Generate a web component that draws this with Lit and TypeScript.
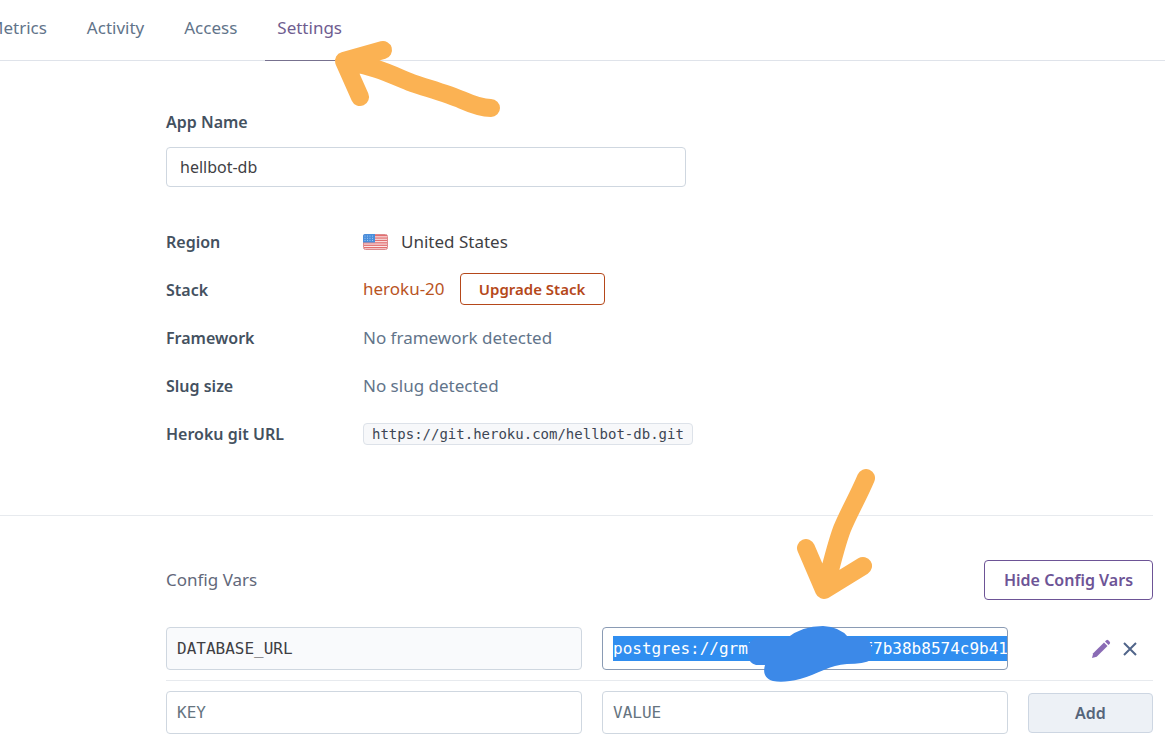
import { LitElement, html, css, svg } from "lit";
import { customElement, query } from "lit/decorators.js";

const TABS = ["Metrics", "Activity", "Access", "Settings"];

@customElement("app-root")
export class AppRoot extends LitElement {
  static styles = css`
    :host {
      display: block;
      min-height: 100vh;
      overflow-x: clip;
      background: #fff;
      color: #3f3f44;
      font: 16px/24px "Noto Sans", "Open Sans", sans-serif;
    }
    * {
      box-sizing: border-box;
    }
    .tabs {
      border-bottom: 1px solid #dfe3ea;
    }
    .tab-list {
      display: flex;
      gap: 16px;
      height: 60px;
      margin: 0 0 0 -24px;
      padding: 0;
      list-style: none;
    }
    .tab-item {
      position: relative;
      height: 61px;
    }
    .tab {
      display: block;
      height: 61px;
      padding: 16px 12px;
      color: #62748a;
      font-size: 17px;
      text-decoration: none;
    }
    .tab.active {
      color: #6f5d90;
      border-bottom: 1px solid #77718f;
    }
    .tab-arrow {
      position: absolute;
      left: 64px;
      top: 34px;
      z-index: 1;
      pointer-events: none;
    }
    .section {
      margin-right: 12px;
      padding-left: 166px;
    }
    .info {
      padding-top: 49px;
      padding-bottom: 57px;
      border-bottom: 1px solid #e7eaee;
    }
    .label {
      display: block;
      color: #44515f;
      font-size: 16px;
      font-weight: 600;
    }
    .field {
      display: block;
      width: 100%;
      border: 1px solid #cfd7e0;
      border-radius: 4px;
      background: #fff;
      color: #3f3f44;
      outline: none;
    }
    .app-name {
      max-width: 520px;
      height: 40px;
      margin: 13px 0 31px;
      padding: 0 13px;
      font: 16px/24px "Noto Sans", "Open Sans", sans-serif;
    }
    .facts {
      display: grid;
      grid-template-columns: 197px 1fr;
      grid-auto-rows: 48px;
      align-items: center;
      margin: 0;
    }
    .value {
      display: flex;
      align-items: center;
      margin: 0;
      font-size: 17px;
      color: #62748a;
    }
    .region {
      gap: 13px;
      color: #3f3f44;
    }
    .stack {
      gap: 15px;
      padding-bottom: 2px;
      color: #b9541f;
    }
    .button {
      border: 1px solid;
      border-radius: 4px;
      background: #fff;
      font: 600 16px/24px "Noto Sans", "Open Sans", sans-serif;
      cursor: pointer;
    }
    .upgrade {
      width: 145px;
      height: 32px;
      padding: 0;
      color: #b5481a;
      font-size: 15px;
    }
    .hide {
      width: 169px;
      height: 40px;
      padding: 0;
      color: #6d5496;
    }
    .git {
      padding: 0 8px;
      border: 1px solid #dde2e9;
      border-radius: 4px;
      background: #f7f8fa;
      color: #3d4654;
      font: 14px/20px "DejaVu Sans Mono", monospace;
    }
    .vars {
      padding-top: 44px;
    }
    .vars-head {
      display: flex;
      align-items: center;
      justify-content: space-between;
      margin-bottom: 27px;
    }
    .title {
      margin: 0;
      color: #62687a;
      font-size: 17px;
      font-weight: 400;
    }
    .row {
      display: grid;
      grid-template-columns: 416fr 406fr 125px;
      gap: 20px;
      align-items: center;
    }
    .row + .row {
      margin-top: 10px;
      padding-top: 10px;
      border-top: 1px solid #e7eaee;
    }
    .var {
      height: 43px;
      padding: 0 0 0 10px;
      font: 16px/25px "DejaVu Sans Mono", monospace;
    }
    .var::placeholder {
      color: #66747f;
      opacity: 1;
    }
    .var.locked {
      background: #f9fafc;
    }
    .var.current {
      border-color: #8a9bb4;
      background: linear-gradient(#308ef0, #308ef0) left center / 100% 25px no-repeat content-box content-box;
      color: #fff;
    }
    .var.current::selection {
      background: #308ef0;
      color: #fff;
    }
    .secret {
      position: relative;
    }
    .scribble {
      position: absolute;
      left: 138px;
      top: -167px;
      pointer-events: none;
    }
    .actions {
      display: flex;
      justify-content: flex-end;
      gap: 12px;
      padding-right: 16px;
    }
    .icon {
      display: block;
      padding: 0;
      border: 0;
      background: none;
      cursor: pointer;
    }
    .icon svg,
    .flag {
      display: block;
    }
    .add {
      height: 40px;
      border-color: #cdd6e2;
      background: #edf1f6;
      color: #56657a;
    }
  `;

  @query(".current") current!: HTMLInputElement;

  firstUpdated() {
    this.current.focus({ preventScroll: true });
    this.current.select();
  }

  private flag() {
    return html`<svg class="flag" width="25" height="16" viewBox="0 0 25 16" aria-hidden="true">
      <rect x=".5" y=".5" width="24" height="15" rx="2" fill="#fbe9e9" stroke="#dc8a8c" />
      ${[1, 3.4, 5.8, 8.2, 10.6, 13].map(
        (y) => svg`<rect x="1" y=${y} width="23" height="1.3" fill="#e26f70" />`
      )}
      <path d="M2 0h10v8.500H0V2a2 2 0 0 1 2-2z" fill="#4a8edb" />
      ${[2, 4.3, 6.6].map((y) =>
        [2, 4.5, 7, 9.5].map((x) => svg`<circle cx=${x} cy=${y} r=".5" fill="#b9d8f8" />`)
      )}
    </svg>`;
  }

  render() {
    return html`
      <nav class="tabs">
        <ul class="tab-list">
          ${TABS.map(
            (name) => html`<li class="tab-item">
              <a class="tab ${name === "Settings" ? "active" : ""}" href="#${name.toLowerCase()}">${name}</a>
              ${name === "Settings"
                ? html`<svg class="tab-arrow" width="180" height="90" viewBox="329 34 180 90" aria-hidden="true">
                    <path
                      d="M383 50L344 61L360 97M346 62C376 66 392 75 412 83C430 89 448 94 462 100Q480 108 491 108"
                      fill="none" stroke="#fbb253" stroke-width="18" stroke-linecap="round" stroke-linejoin="round" />
                  </svg>`
                : ""}
            </li>`
          )}
        </ul>
      </nav>

      <section class="section info">
        <label class="label" for="app-name">App Name</label>
        <input class="field app-name" id="app-name" type="text" .value=${"hellbot-db"} />
        <dl class="facts">
          <dt class="label">Region</dt>
          <dd class="value region">${this.flag()}<span>United States</span></dd>
          <dt class="label">Stack</dt>
          <dd class="value stack">
            <span>heroku-20</span><button class="button upgrade" type="button">Upgrade Stack</button>
          </dd>
          <dt class="label">Framework</dt>
          <dd class="value">No framework detected</dd>
          <dt class="label">Slug size</dt>
          <dd class="value">No slug detected</dd>
          <dt class="label">Heroku git URL</dt>
          <dd class="value"><code class="git">https://git.heroku.com/hellbot-db.git</code></dd>
        </dl>
      </section>

      <section class="section vars">
        <header class="vars-head">
          <h2 class="title">Config Vars</h2>
          <button class="button hide" type="button">Hide Config Vars</button>
        </header>
        <div class="row">
          <input class="field var locked" type="text" readonly aria-label="Key" .value=${"DATABASE_URL"} />
          <div class="secret">
            <input class="field var current" type="text" aria-label="Value"
              .value=${"postgres://grml***********f7b38b8574c9b41"} />
            <svg class="scribble" width="190" height="230" viewBox="740 460 190 230" aria-hidden="true">
              <path
                d="M866 478C858 497 849 512 842 529C836 545 832 562 826 586M806 548L824 590L863 566"
                fill="none" stroke="#fbb253" stroke-width="18" stroke-linecap="round" stroke-linejoin="round" />
              <path
                d="M749 643L755 638H787Q802 626 823 626Q840 627 848 637H866L871 644V660Q864 664 847 664C830 665 818 674 800 679Q784 683 773 681C764 678 763 672 765 665H756Q749 663 748 656Z"
                fill="#3c89e8" />
            </svg>
          </div>
          <div class="actions">
            <button class="icon" type="button" aria-label="Edit">
              <svg width="20" height="20" viewBox="0 0 20 20" fill="#8a6bb5">
                <path d="M1 19L2.200 14.300L13 3.500L16.500 7L5.700 17.800Z" />
                <path d="M14 2.500L15.300 1.200Q16.300.5 17.300 1.300L18.700 2.700Q19.500 3.700 18.800 4.700L17.500 6Z" />
              </svg>
            </button>
            <button class="icon" type="button" aria-label="Remove">
              <svg width="14" height="20" viewBox="0 0 14 20">
                <path d="M1 4L13 16M13 4L1 16" stroke="#51658a" stroke-width="2" />
              </svg>
            </button>
          </div>
        </div>
        <div class="row">
          <input class="field var" type="text" aria-label="New key" placeholder="KEY" />
          <input class="field var" type="text" aria-label="New value" placeholder="VALUE" />
          <button class="button add" type="button">Add</button>
        </div>
      </section>
    `;
  }
}
